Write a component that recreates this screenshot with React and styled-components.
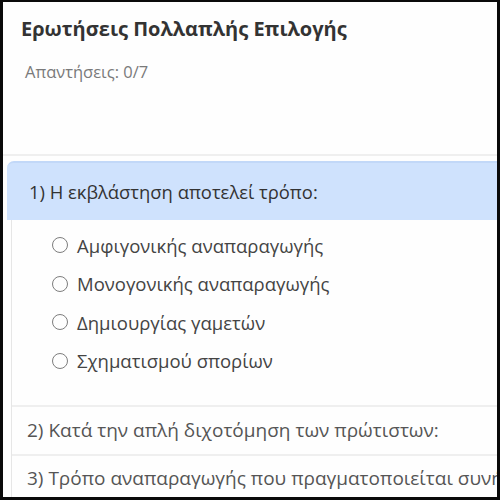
import React from "react";
import styled, { createGlobalStyle } from "styled-components";

const GlobalStyle = createGlobalStyle`
  html, body {
    margin: 0;
    padding: 0;
    background: #fff;
  }
  body {
    font-family: "Open Sans", "Noto Sans", sans-serif;
  }
`;

const Frame = styled.div`
  box-sizing: border-box;
  width: 500px;
  height: 500px;
  overflow: hidden;
  border: 2px solid #0a0a0a;
  border-left-width: 3px;
  border-bottom-width: 3px;
  border-right-width: 3px;
  background: #fefefe;
  display: flex;
  flex-direction: column;
`;

const Header = styled.div`
  height: 154px;
  flex-shrink: 0;
  padding: 13px 18px 0;
  box-sizing: border-box;
  border-bottom: 2px solid #efefef;
`;

const Title = styled.h1`
  margin: 0;
  font-size: 20px;
  font-weight: 700;
  color: #333;
  line-height: 28px;
`;

const Count = styled.div`
  margin: 18px 0 0 4px;
  font-size: 16.5px;
  color: #7a7a7a;
  line-height: 22px;
`;

const Card = styled.div`
  margin: 5px 0 0 4px;
  display: flex;
  flex-direction: column;
  flex: 1;
`;

const QuestionHead = styled.div`
  height: 57px;
  flex-shrink: 0;
  display: flex;
  align-items: center;
  padding-left: 22px;
  background: #cfe2fd;
  border-top: 2px solid #c2d8f8;
  border-top-left-radius: 7px;
  font-size: 18.4px;
  color: #333;
  white-space: nowrap;
`;

const Body = styled.div`
  margin-left: 4px;
  border-left: 1px solid #e6e6e6;
  display: flex;
  flex-direction: column;
  flex: 1;
`;

const Options = styled.div`
  display: flex;
  flex-direction: column;
  gap: 18.5px;
  padding: 15px 0 34px 40px;
  border-bottom: 2px solid #efefef;
`;

const Option = styled.label`
  display: flex;
  align-items: center;
  gap: 9px;
  height: 20px;
  font-size: 18.5px;
  color: #444;
  white-space: nowrap;
`;

const Radio = styled.span`
  box-sizing: border-box;
  width: 16px;
  height: 16px;
  border: 1.7px solid #7d7d7d;
  border-radius: 50%;
  flex-shrink: 0;
`;

const Item = styled.div`
  height: ${(p) => p.$h}px;
  flex-shrink: 0;
  display: flex;
  align-items: center;
  padding-left: 15px;
  font-size: 19px;
  color: #555;
  white-space: nowrap;
  border-bottom: 2px solid #efefef;
`;

const options = [
  "Αμφιγονικής αναπαραγωγής",
  "Μονογονικής αναπαραγωγής",
  "Δημιουργίας γαμετών",
  "Σχηματισμού σπορίων",
];

export default function App() {
  return (
    <Frame>
      <GlobalStyle />
      <Header>
        <Title>Ερωτήσεις Πολλαπλής Επιλογής</Title>
        <Count>Απαντήσεις: 0/7</Count>
      </Header>
      <Card>
        <QuestionHead>1) Η εκβλάστηση αποτελεί τρόπο:</QuestionHead>
        <Body>
          <Options>
            {options.map((o) => (
              <Option key={o}>
                <Radio />
                {o}
              </Option>
            ))}
          </Options>
          <Item $h={47}>2) Κατά την απλή διχοτόμηση των πρώτιστων:</Item>
          <Item $h={44}>3) Τρόπο αναπαραγωγής που πραγματοποιείται συνήθως</Item>
        </Body>
      </Card>
    </Frame>
  );
}
